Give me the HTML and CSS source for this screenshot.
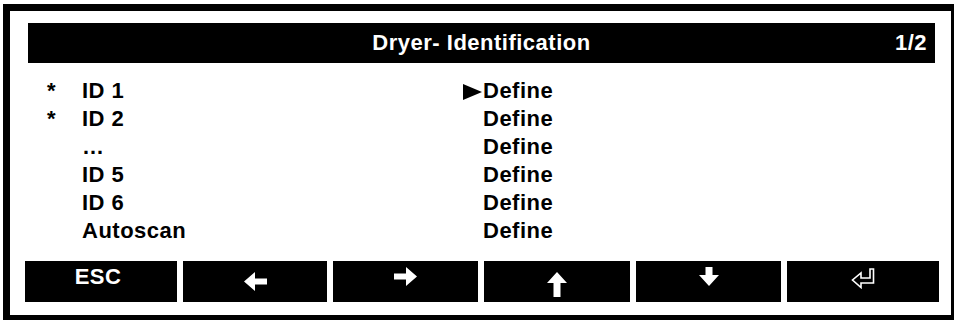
FILE: index.html
```html
<!DOCTYPE html>
<html>

<head>
    <title>Dryer- Identification</title>
    <link rel="stylesheet" href="styles.css">
</head>

<body>
    <div class="screen">
        <div class="title-bar">
            <span></span>
            <span class="title">Dryer- Identification</span>
            <span class="page">1/2</span>
        </div>

        <div class="menu">
            <div class="row">
                <span class="mark">*</span><span class="label">ID 1</span>
                <span class="cursor"><svg width="19" height="16" viewBox="0 0 19 16"><polygon points="0,0 19,8 0,16" fill="#000"/></svg></span>
                <span class="value">Define</span>
            </div>
            <div class="row">
                <span class="mark">*</span><span class="label">ID 2</span>
                <span class="cursor"></span><span class="value">Define</span>
            </div>
            <div class="row">
                <span class="mark"></span><span class="label">…</span>
                <span class="cursor"></span><span class="value">Define</span>
            </div>
            <div class="row">
                <span class="mark"></span><span class="label">ID 5</span>
                <span class="cursor"></span><span class="value">Define</span>
            </div>
            <div class="row">
                <span class="mark"></span><span class="label">ID 6</span>
                <span class="cursor"></span><span class="value">Define</span>
            </div>
            <div class="row">
                <span class="mark"></span><span class="label">Autoscan</span>
                <span class="cursor"></span><span class="value">Define</span>
            </div>
        </div>

        <!-- soft keys -->
        <div class="keys">
            <div class="key"><span class="esc">ESC</span></div>
            <div class="key">
                <svg width="23" height="19" viewBox="0 0 23 19"><path d="M23 6.5H11V0L0 9.5L11 19V12.5H23Z" fill="#fff"/></svg>
            </div>
            <div class="key">
                <svg class="up5" width="23" height="19" viewBox="0 0 23 19"><path d="M0 6.5H12V0L23 9.5L12 19V12.5H0Z" fill="#fff"/></svg>
            </div>
            <div class="key">
                <svg class="down3" width="20" height="25" viewBox="0 0 20 25"><path d="M10 0L20 11H13.5V25H6.5V11H0Z" fill="#fff"/></svg>
            </div>
            <div class="key">
                <svg class="up5" width="20" height="19" viewBox="0 0 20 19"><path d="M6.5 0H13.5V8H20L10 19L0 8H6.5Z" fill="#fff"/></svg>
            </div>
            <div class="key">
                <svg class="up4" width="24" height="21" viewBox="0 0 24 21"><path d="M19 1H22.5V15H10V19.5L1.5 12L10 5V10H19Z" fill="none" stroke="#fff" stroke-width="1.6" stroke-linejoin="miter"/></svg>
            </div>
        </div>
    </div>
</body>

</html>
```

FILE: styles.css
```css
/* Reset default margins */
html, body {
  margin: 0;
  padding: 0;
}

body {
  background-color: #fff;
  font-family: "Liberation Sans", Arial, sans-serif;
  font-weight: bold;
  font-size: 22px;
  letter-spacing: 0.5px;
  color: #000;
}

/* Outer panel frame, heavier on top and left */
.screen {
  box-sizing: border-box;
  width: 951px;
  height: 316px;
  margin: 4px 0 0 3px;
  border-style: solid;
  border-color: #000;
  border-width: 7px 3px 5px 7px;
  padding: 12px 11px 13px 15px;
  display: flex;
  flex-direction: column;
}

/* Title bar */
.title-bar {
  height: 40px;
  margin: 0 5px 0 3px;
  background-color: #000;
  color: #fff;
  display: grid;
  grid-template-columns: 1fr auto 1fr;
  align-items: center;
  padding: 0 8px;
}

.page {
  justify-self: end;
}

/* Menu rows */
.menu {
  margin-top: 14px;
  padding-left: 22px;
}

.row {
  display: grid;
  grid-template-columns: 35px 381px 20px auto;
  height: 28px;
  line-height: 28px;
}

.cursor {
  display: flex;
  align-items: center;
}

.cursor svg {
  margin-top: 1px;
}

/* Soft keys */
.keys {
  margin-top: 16px;
  display: grid;
  grid-template-columns: 152px 144px 145px 146px 145px 152px;
  gap: 6px;
}

.key {
  height: 41px;
  background-color: #000;
  color: #fff;
  display: flex;
  align-items: center;
  justify-content: center;
}

.esc {
  margin-bottom: 9px;
  margin-right: 6px;
}

.up5 {
  margin-bottom: 10px;
}

.up4 {
  margin-bottom: 7px;
}

.down3 {
  margin-top: 5px;
}
```
